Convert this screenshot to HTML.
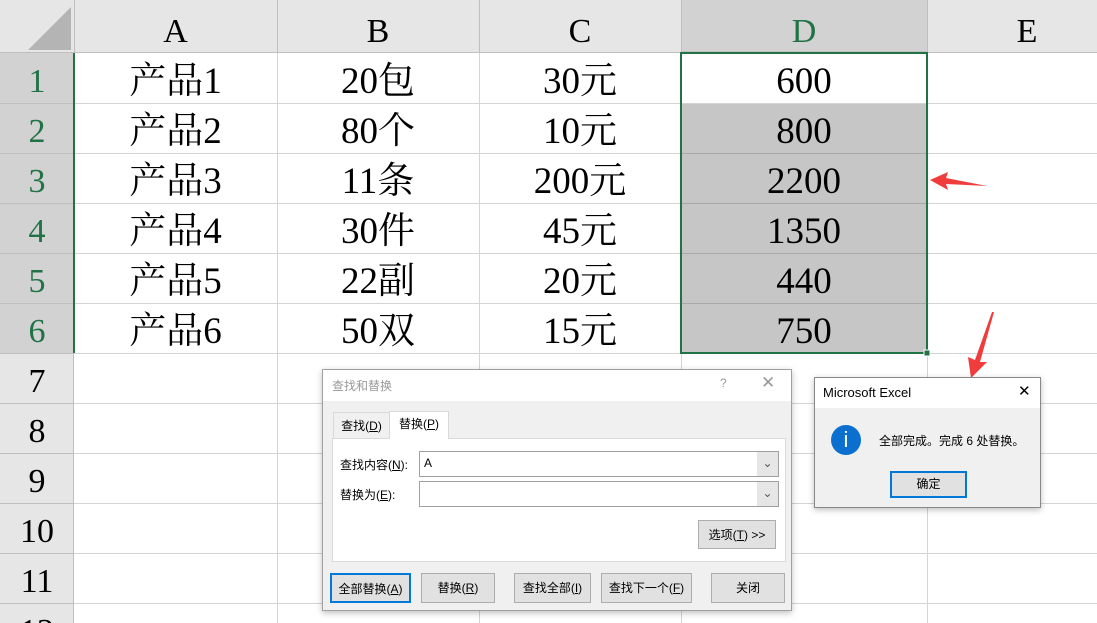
<!DOCTYPE html><html><head><meta charset="utf-8"><style>
html,body{margin:0;width:1097px;height:623px;overflow:hidden}
body{background:#fff;position:relative;font-family:"Liberation Serif","Noto Serif CJK SC",serif}
div{position:absolute;box-sizing:border-box}
.c{text-align:center;font-size:34px;line-height:50px;color:#000}
.d .c{font-size:37px}
.ui{font-family:"Liberation Sans","Noto Sans CJK SC",sans-serif;font-size:12px;color:#000}
.btn{background:#e1e1e1;border:1px solid #adadad;text-align:center;line-height:28px}
</style></head><body>
<div style="left:0;top:0;width:1097px;height:53px;background:#e6e6e6;border-bottom:1px solid #bfbfbf"></div>
<div style="left:0;top:53px;width:74px;height:570px;background:#e6e6e6;border-right:1px solid #bfbfbf"></div>
<div style="left:0;top:53px;width:74px;height:300px;background:#d2d2d2"></div>
<div style="left:681px;top:0;width:246px;height:53px;background:#d2d2d2;border-bottom:2px solid #bfbfbf"></div>
<svg style="position:absolute;left:26px;top:5px" width="46" height="46"><polygon points="45,2 45,45 2,45" fill="#b4b4b4"/></svg>
<svg style="position:absolute;left:0;top:0" width="1097" height="623">
<g stroke="#d4d4d4" stroke-width="1">
<line x1="277.5" y1="0" x2="277.5" y2="623"/><line x1="479.5" y1="0" x2="479.5" y2="623"/><line x1="681.5" y1="0" x2="681.5" y2="623"/><line x1="927.5" y1="0" x2="927.5" y2="623"/>
<line x1="74" y1="103.5" x2="1097" y2="103.5"/><line x1="74" y1="153.5" x2="1097" y2="153.5"/><line x1="74" y1="203.5" x2="1097" y2="203.5"/><line x1="74" y1="253.5" x2="1097" y2="253.5"/><line x1="74" y1="303.5" x2="1097" y2="303.5"/><line x1="74" y1="353.5" x2="1097" y2="353.5"/><line x1="74" y1="403.5" x2="1097" y2="403.5"/><line x1="74" y1="453.5" x2="1097" y2="453.5"/><line x1="74" y1="503.5" x2="1097" y2="503.5"/><line x1="74" y1="553.5" x2="1097" y2="553.5"/><line x1="74" y1="603.5" x2="1097" y2="603.5"/>
</g>
<g stroke="#bfbfbf"><line x1="0" y1="103.5" x2="74" y2="103.5"/><line x1="0" y1="153.5" x2="74" y2="153.5"/><line x1="0" y1="203.5" x2="74" y2="203.5"/><line x1="0" y1="253.5" x2="74" y2="253.5"/><line x1="0" y1="303.5" x2="74" y2="303.5"/><line x1="0" y1="353.5" x2="74" y2="353.5"/><line x1="0" y1="403.5" x2="74" y2="403.5"/><line x1="0" y1="453.5" x2="74" y2="453.5"/><line x1="0" y1="503.5" x2="74" y2="503.5"/><line x1="0" y1="553.5" x2="74" y2="553.5"/><line x1="0" y1="603.5" x2="74" y2="603.5"/>
<line x1="74.5" y1="0" x2="74.5" y2="53"/><line x1="277.5" y1="0" x2="277.5" y2="53"/><line x1="479.5" y1="0" x2="479.5" y2="53"/><line x1="681.5" y1="0" x2="681.5" y2="53"/><line x1="927.5" y1="0" x2="927.5" y2="53"/></g>
</svg>
<div style="left:682px;top:104px;width:244px;height:249px;background:#c6c6c6"></div>
<svg style="position:absolute;left:0;top:0" width="1097" height="623"><g stroke="#a8a8a8"><line x1="682" y1="153.5" x2="926" y2="153.5"/><line x1="682" y1="203.5" x2="926" y2="203.5"/><line x1="682" y1="253.5" x2="926" y2="253.5"/><line x1="682" y1="303.5" x2="926" y2="303.5"/></g>
<line x1="74" y1="53" x2="74" y2="353" stroke="#217346" stroke-width="2"/>
<rect x="681" y="53" width="246" height="300" fill="none" stroke="#217346" stroke-width="2"/>
<rect x="924" y="350" width="6" height="6" fill="#217346" stroke="#fff"/>
<polygon points="930,180 948,172 946,178 987,186 946,184 948,190" fill="#f03c3c"/>
<polygon points="994,312 980,362 987,362 971,378 968,357 975,360 992,312" fill="#f03c3c"/>
</svg>
<div class="c" style="left:74px;top:7px;width:203px">A</div>
<div class="c" style="left:277px;top:7px;width:202px">B</div>
<div class="c" style="left:479px;top:7px;width:202px">C</div>
<div class="c" style="left:681px;top:7px;width:246px;color:#217346">D</div>
<div class="c" style="left:927px;top:7px;width:200px">E</div>
<div class="c" style="left:0;top:57px;width:74px;color:#217346">1</div>
<div class="c" style="left:0;top:107px;width:74px;color:#217346">2</div>
<div class="c" style="left:0;top:157px;width:74px;color:#217346">3</div>
<div class="c" style="left:0;top:207px;width:74px;color:#217346">4</div>
<div class="c" style="left:0;top:257px;width:74px;color:#217346">5</div>
<div class="c" style="left:0;top:307px;width:74px;color:#217346">6</div>
<div class="c" style="left:0;top:357px;width:74px">7</div>
<div class="c" style="left:0;top:407px;width:74px">8</div>
<div class="c" style="left:0;top:457px;width:74px">9</div>
<div class="c" style="left:0;top:507px;width:74px">10</div>
<div class="c" style="left:0;top:557px;width:74px">11</div>
<div class="c" style="left:0;top:607px;width:74px;height:16px;overflow:hidden">12</div>
<div class="d" style="left:74px;top:57px;width:203px"><div class="c" style="position:static">产品1</div><div class="c" style="position:static">产品2</div><div class="c" style="position:static">产品3</div><div class="c" style="position:static">产品4</div><div class="c" style="position:static">产品5</div><div class="c" style="position:static">产品6</div></div>
<div class="d" style="left:277px;top:57px;width:202px"><div class="c" style="position:static">20包</div><div class="c" style="position:static">80个</div><div class="c" style="position:static">11条</div><div class="c" style="position:static">30件</div><div class="c" style="position:static">22副</div><div class="c" style="position:static">50双</div></div>
<div class="d" style="left:479px;top:57px;width:202px"><div class="c" style="position:static">30元</div><div class="c" style="position:static">10元</div><div class="c" style="position:static">200元</div><div class="c" style="position:static">45元</div><div class="c" style="position:static">20元</div><div class="c" style="position:static">15元</div></div>
<div class="d" style="left:681px;top:57px;width:246px"><div class="c" style="position:static">600</div><div class="c" style="position:static">800</div><div class="c" style="position:static">2200</div><div class="c" style="position:static">1350</div><div class="c" style="position:static">440</div><div class="c" style="position:static">750</div></div>
<div class="ui" style="left:322px;top:369px;width:470px;height:242px;background:#f0f0f0;border:1px solid #a0a0a0;box-shadow:0 2px 6px rgba(0,0,0,.25)">
<div style="left:0;top:0;width:468px;height:31px;background:#fff"></div>
<div style="left:9px;top:7px;color:#999">查找和替换</div>
<div style="left:397px;top:6px;color:#999">?</div>
<div style="left:438px;top:3px;color:#999;font-size:17px;font-weight:100">✕</div>
<div style="left:10px;top:42px;width:57px;height:27px;border:1px solid #d9d9d9;border-bottom:none;line-height:26px;text-align:center">查找(<u>D</u>)</div>
<div style="left:66px;top:41px;width:60px;height:28px;background:#fff;border:1px solid #d9d9d9;border-bottom:none;line-height:24px;text-align:center;z-index:2">替换(<u>P</u>)</div>
<div style="left:9px;top:68px;width:454px;height:124px;background:#fff;border:1px solid #d9d9d9"></div>
<div style="left:17px;top:86px">查找内容(<u>N</u>):</div>
<div style="left:96px;top:81px;width:360px;height:26px;border:1px solid #a0a0a0;background:#fff;padding:4px 4px">A</div>
<div style="left:434px;top:82px;width:21px;height:24px;background:#e6e6e6;color:#555;text-align:center;line-height:22px">⌄</div>
<div style="left:17px;top:116px">替换为(<u>E</u>):</div>
<div style="left:96px;top:111px;width:360px;height:26px;border:1px solid #a0a0a0;background:#fff"></div>
<div style="left:434px;top:112px;width:21px;height:24px;background:#e6e6e6;color:#555;text-align:center;line-height:22px">⌄</div>
<div class="btn" style="left:375px;top:150px;width:78px;height:29px">选项(<u>T</u>) &gt;&gt;</div>
<div class="btn" style="left:7px;top:203px;width:81px;height:30px;border:2px solid #0078d7">全部替换(<u>A</u>)</div>
<div class="btn" style="left:98px;top:203px;width:74px;height:30px">替换(<u>R</u>)</div>
<div class="btn" style="left:191px;top:203px;width:77px;height:30px">查找全部(<u>I</u>)</div>
<div class="btn" style="left:278px;top:203px;width:91px;height:30px">查找下一个(<u>F</u>)</div>
<div class="btn" style="left:388px;top:203px;width:74px;height:30px">关闭</div>
</div>
<div class="ui" style="left:814px;top:377px;width:227px;height:131px;background:#f0f0f0;border:1px solid #888;box-shadow:0 2px 6px rgba(0,0,0,.25)">
<div style="left:0;top:0;width:225px;height:30px;background:#fff"></div>
<div style="left:8px;top:7px;font-size:13px">Microsoft Excel</div>
<div style="left:203px;top:4px;font-size:15px;font-weight:100">✕</div>
<div style="left:16px;top:47px;width:30px;height:30px;border-radius:50%;background:#0a6fcf;color:#fff;text-align:center;line-height:30px;font-size:22px;font-family:'Liberation Sans',sans-serif">i</div>
<div style="left:64px;top:54px;font-size:12px">全部完成。完成 6 处替换。</div>
<div class="btn" style="left:75px;top:93px;width:77px;height:27px;border:2px solid #0078d7;line-height:23px">确定</div>
</div>
</body></html>
